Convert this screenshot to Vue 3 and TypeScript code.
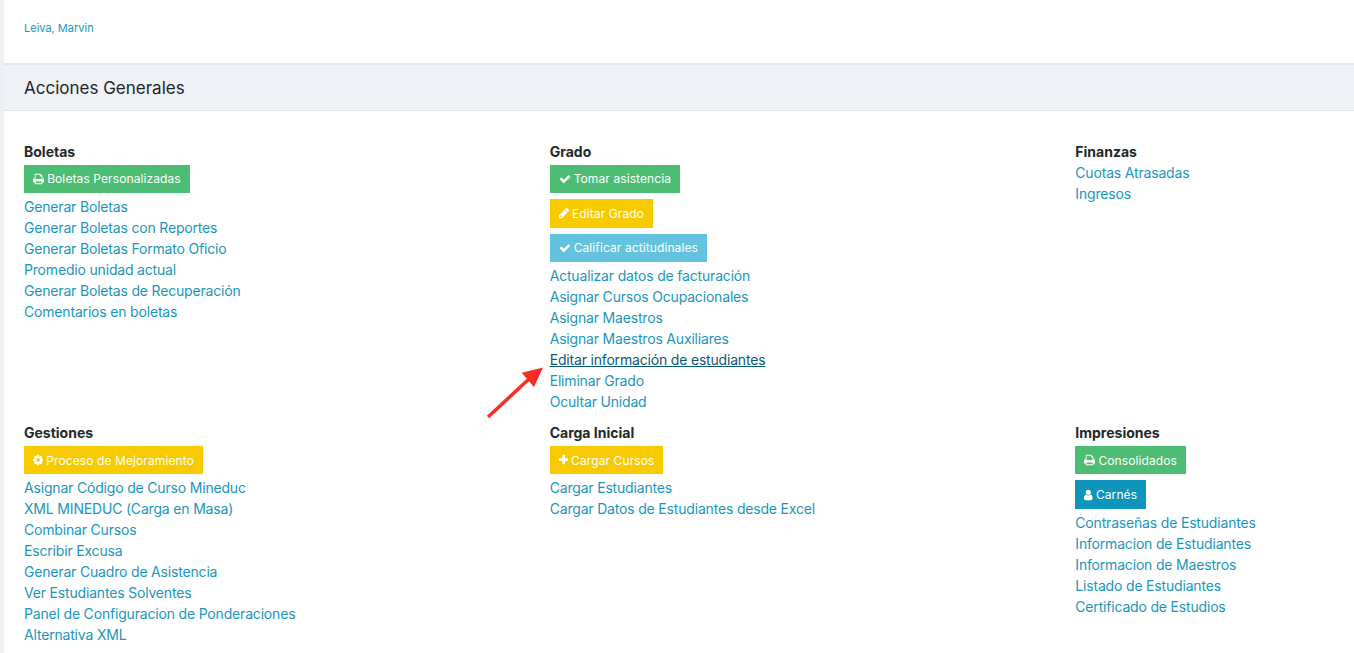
<script setup lang="ts">
type IconName = 'print' | 'check' | 'pencil' | 'cog' | 'plus' | 'user'
interface Btn { label: string; icon: IconName; color: string; tall?: boolean }
interface Section { title: string; buttons: Btn[]; links: string[]; hover?: string }

const icons: Record<IconName, string> = {
  check: 'M1671 566q0-40-28-68l-136-136q-28-28-68-28t-68 28l-656 657-294-295q-28-28-68-28t-68 28l-136 136q-28 28-28 68t28 68l362 362 136 136q28 28 68 28t68-28l136-136 724-724q28-28 28-68z',
  plus: 'M1600 736v192q0 40-28 68t-68 28h-416v416q0 40-28 68t-68 28h-192q-40 0-68-28t-28-68v-416h-416q-40 0-68-28t-28-68v-192q0-40 28-68t68-28h416v-416q0-40 28-68t68-28h192q40 0 68 28t28 68v416h416q40 0 68 28t28 68z',
  user: 'M1536 1399q0 109-62.5 187t-150.5 78h-854q-88 0-150.5-78t-62.5-187q0-85 8.5-160.5t31.5-152 58.5-131 94-89 134.5-34.5q131 128 313 128t313-128q76 0 134.5 34.5t94 89 58.5 131 31.5 152 8.5 160.5zm-256-887q0 159-112.5 271.5t-271.5 112.5-271.5-112.5-112.5-271.5 112.5-271.5 271.5-112.5 271.5 112.5 112.5 271.5z',
  pencil: 'M491 1536l91-91-235-235-91 91v107h128v128h107zm523-928q0-22-22-22-10 0-17 7l-542 542q-7 7-7 17 0 22 22 22 10 0 17-7l542-542q7-7 7-17zm-54-192l416 416-832 832h-416v-416zm683 96q0 53-37 90l-166 166-416-416 166-165q36-38 90-38 53 0 91 38l235 234q37 39 37 91z',
  print: 'M448 1536h896v-256h-896v256zm0-640h896v-384h-160q-40 0-68-28t-28-68v-160h-640v640zm1152 64q0-26-19-45t-45-19-45 19-19 45 19 45 45 19 45-19 19-45zm128 0v416q0 13-9.5 22.5t-22.5 9.5h-224v160q0 40-28 68t-68 28h-960q-40 0-68-28t-28-68v-160h-224q-13 0-22.5-9.5t-9.5-22.5v-416q0-79 56.5-135.5t135.5-56.5h64v-544q0-40 28-68t68-28h672q40 0 88 20t76 48l152 152q28 28 48 76t20 88v256h64q79 0 135.5 56.5t56.5 135.5z',
  cog: 'M1152 896q0-106-75-181t-181-75-181 75-75 181 75 181 181 75 181-75 75-181zm512-109v222q0 12-8 23t-20 13l-185 28q-19 54-39 91 35 50 107 138 10 12 10 25t-9 23q-27 37-99 108t-94 71q-12 0-26-9l-138-108q-44 23-91 38-16 136-29 186-7 28-36 28h-222q-14 0-24.5-8.5t-11.5-21.5l-28-184q-49-16-90-37l-141 107q-10 9-25 9-14 0-25-11-126-114-165-168-7-10-7-23 0-12 8-23 15-21 51-66.5t54-70.5q-27-50-41-99l-183-27q-13-2-21-12.5t-8-23.5v-222q0-12 8-23t19-13l186-28q14-46 39-92-40-57-107-138-10-12-10-24 0-10 9-23 26-36 98.5-107.5t94.5-71.5q13 0 26 10l138 107q44-23 91-38 16-136 29-186 7-28 36-28h222q14 0 24.5 8.5t11.5 21.5l28 184q49 16 90 37l142-107q9-9 24-9 13 0 25 10 129 119 165 170 7 8 7 22 0 12-8 23-15 21-51 66.5t-54 70.5q26 50 41 98l183 28q13 2 21 12.5t8 23.5z',
}

const boxes: Record<IconName, string> = {
  check: '0 0 1792 1792',
  plus: '192 0 1408 1792',
  user: '256 0 1280 1792',
  pencil: '128 0 1536 1792',
  print: '64 0 1664 1792',
  cog: '128 0 1536 1792',
}

const sections: Section[] = [
  {
    title: 'Boletas',
    buttons: [{ label: 'Boletas Personalizadas', icon: 'print', color: 'green' }],
    links: ['Generar Boletas', 'Generar Boletas con Reportes', 'Generar Boletas Formato Oficio', 'Promedio unidad actual', 'Generar Boletas de Recuperación', 'Comentarios en boletas'],
  },
  {
    title: 'Grado',
    buttons: [
      { label: 'Tomar asistencia', icon: 'check', color: 'green' },
      { label: 'Editar Grado', icon: 'pencil', color: 'yellow', tall: true },
      { label: 'Calificar actitudinales', icon: 'check', color: 'info' },
    ],
    links: ['Actualizar datos de facturación', 'Asignar Cursos Ocupacionales', 'Asignar Maestros', 'Asignar Maestros Auxiliares', 'Editar información de estudiantes', 'Eliminar Grado', 'Ocultar Unidad'],
    hover: 'Editar información de estudiantes',
  },
  {
    title: 'Finanzas',
    buttons: [],
    links: ['Cuotas Atrasadas', 'Ingresos'],
  },
  {
    title: 'Gestiones',
    buttons: [{ label: 'Proceso de Mejoramiento', icon: 'cog', color: 'yellow' }],
    links: ['Asignar Código de Curso Mineduc', 'XML MINEDUC (Carga en Masa)', 'Combinar Cursos', 'Escribir Excusa', 'Generar Cuadro de Asistencia', 'Ver Estudiantes Solventes', 'Panel de Configuracion de Ponderaciones', 'Alternativa XML'],
  },
  {
    title: 'Carga Inicial',
    buttons: [{ label: 'Cargar Cursos', icon: 'plus', color: 'yellow' }],
    links: ['Cargar Estudiantes', 'Cargar Datos de Estudiantes desde Excel'],
  },
  {
    title: 'Impresiones',
    buttons: [
      { label: 'Consolidados', icon: 'print', color: 'green' },
      { label: 'Carnés', icon: 'user', color: 'primary', tall: true },
    ],
    links: ['Contraseñas de Estudiantes', 'Informacion de Estudiantes', 'Informacion de Maestros', 'Listado de Estudiantes', 'Certificado de Estudios'],
  },
]
</script>

<template>
  <div class="page">
    <div class="top">
      <a class="teacher" href="#">Leiva, Marvin</a>
    </div>
    <div class="card-header">Acciones Generales</div>
    <div class="grid">
      <section v-for="s in sections" :key="s.title" class="col">
        <h4 class="title">{{ s.title }}</h4>
        <a
          v-for="b in s.buttons"
          :key="b.label"
          href="#"
          class="btn"
          :class="[b.color, { tall: b.tall }]"
        >
          <svg class="ico" :class="'ico-' + b.icon" :viewBox="boxes[b.icon]" aria-hidden="true"><path :d="icons[b.icon]" fill="currentColor" /></svg>
          <span>{{ b.label }}</span>
        </a>
        <a
          v-for="l in s.links"
          :key="l"
          href="#"
          class="link"
          :class="{ hover: l === s.hover }"
        >{{ l }}</a>
      </section>
    </div>
    <svg class="arrow" width="70" height="60" viewBox="480 362 70 60" aria-hidden="true">
      <line x1="488" y1="417" x2="529" y2="379" stroke="#fb2d23" stroke-width="3.5" />
      <polygon points="543,367.5 521.7,372.7 534,387" fill="#fb2d23" />
    </svg>
  </div>
</template>

<style>
html, body { margin: 0; overflow: hidden; background: #fff; }
</style>

<style scoped>
.page {
  position: relative;
  height: 653px;
  overflow: hidden;
  box-sizing: border-box;
  border-left: 4px solid #eef0f6;
  font-family: Inter, "Liberation Sans", sans-serif;
  background: #fff;
}
.top {
  height: 65px;
  box-sizing: border-box;
  padding: 21px 20px 0;
  border-bottom: 2px solid #e4e7ec;
}
.teacher {
  font-size: 11px;
  line-height: 14px;
  display: block;
  color: #1a96bd;
  text-decoration: none;
}
.card-header {
  height: 46px;
  box-sizing: border-box;
  padding: 0 20px;
  background: #f0f2f7;
  border-bottom: 1px solid #e4e7ea;
  font-size: 17px;
  line-height: 46px;
  color: #212529;
}
.grid {
  display: grid;
  grid-template-columns: repeat(3, 525.67px);
  row-gap: 10.9px;
  padding: 30px 0 0 20px;
}
.col {
  display: flex;
  flex-direction: column;
  align-items: flex-start;
}
.title {
  margin: 0;
  font-size: 14px;
  line-height: 21px;
  font-weight: 700;
  color: #23282c;
}
.title + .btn { margin-top: 3px; }
.btn {
  box-sizing: border-box;
  height: 28px;
  padding: 0 9px 0.5px;
  margin-bottom: 6px;
  display: flex;
  align-items: center;
  gap: 3px;
  font-size: 12px;
  letter-spacing: 0.1px;
  color: #fff;
  text-decoration: none;
  white-space: nowrap;
}
.btn.tall { height: 29px; }
.btn:has(+ .link) { margin-bottom: 2.5px; }
.green { background: #4dbd74; }
.yellow { background: #f8cb00; }
.info { background: #63c2de; }
.primary { background: #0f94bb; }
.ico { height: 12px; flex: none; }
.ico-check { width: 12px; }
.ico-plus { width: 9.43px; }
.ico-user { width: 8.57px; }
.ico-pencil { width: 10.29px; }
.ico-print { width: 11.14px; }
.ico-cog { width: 10.29px; }
.link {
  font-size: 14px;
  letter-spacing: -0.18px;
  line-height: 21px;
  color: #1a96bd;
  text-decoration: none;
  white-space: nowrap;
}
.link.hover {
  color: #0e5a73;
  text-decoration: underline;
}
.arrow {
  position: absolute;
  left: 476px;
  top: 362px;
}
</style>
